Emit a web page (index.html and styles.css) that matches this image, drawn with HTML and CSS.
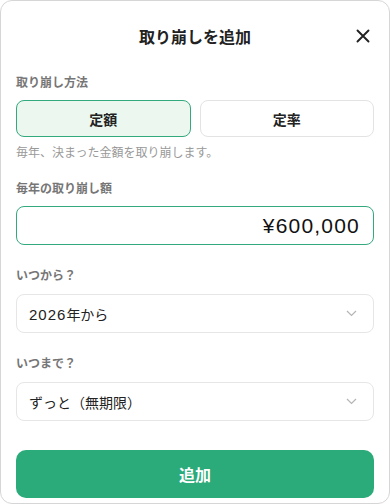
FILE: index.html
```html
<!DOCTYPE html>
<html lang="ja">
<head>
<meta charset="utf-8">
<link rel="stylesheet" href="styles.css">
</head>
<body>
<div class="card">
  <header class="header">
    <h1 class="title">取り崩しを追加</h1>
    <button class="close" aria-label="閉じる">
      <svg width="14" height="14" viewBox="0 0 14 14"><path d="M1.5 1.5L12.5 12.5M12.5 1.5L1.5 12.5" stroke="#222" stroke-width="1.9" stroke-linecap="round" fill="none"/></svg>
    </button>
  </header>

  <div class="label">取り崩し方法</div>
  <div class="toggle">
    <button class="opt active">定額</button>
    <button class="opt">定率</button>
  </div>
  <p class="desc">毎年、決まった金額を取り崩します。</p>

  <div class="label l2">毎年の取り崩し額</div>
  <div class="input">¥600,000</div>

  <div class="label l3">いつから？</div>
  <div class="select"><span><span class="num">2026</span>年から</span>
    <svg class="chev" width="11" height="7" viewBox="0 0 11 7"><path d="M1 1l4.5 4.5L10 1" stroke="#b5b5b5" stroke-width="1.2" fill="none"/></svg>
  </div>

  <div class="label l3">いつまで？</div>
  <div class="select"><span>ずっと（無期限）</span>
    <svg class="chev" width="11" height="7" viewBox="0 0 11 7"><path d="M1 1l4.5 4.5L10 1" stroke="#b5b5b5" stroke-width="1.2" fill="none"/></svg>
  </div>

  <button class="submit">追加</button>
</div>
</body>
</html>
```
FILE: styles.css
```css
* { box-sizing: border-box; }
html, body { margin: 0; padding: 0; background: #fff; }
body {
  font-family: "Liberation Sans", "Noto Sans CJK JP", sans-serif;
  color: #222;
}
.card {
  width: 390px;
  height: 504px;
  border: 1px solid #d6d6d6;
  border-radius: 12px;
  padding: 0 15px;
  display: flex;
  flex-direction: column;
  background: #fff;
}
.header {
  height: 72px;
  display: flex;
  align-items: center;
  justify-content: center;
  position: relative;
  padding-bottom: 3px;
}
.title {
  margin: 0;
  font-size: 16px;
  font-weight: 700;
  font-family: "Noto Sans CJK JP", sans-serif;
  color: #222;
}
.close {
  position: absolute;
  right: 2px;
  top: 26px;
  width: 18px;
  height: 18px;
  padding: 0;
  border: 0;
  background: none;
  display: flex;
  align-items: center;
  justify-content: center;
}
.label {
  font-family: "Noto Sans CJK JP", sans-serif;
  font-size: 12px;
  line-height: 18px;
  font-weight: 700;
  color: #767676;
  margin-bottom: 9px;
}
.l2 { margin-top: 18px; }
.l3 { margin-top: 21px; margin-bottom: 10px; }
.toggle {
  display: flex;
  gap: 9px;
}
.opt {
  flex: 1;
  height: 37px;
  border: 1px solid #e3e3e3;
  border-radius: 8px;
  background: #fff;
  font-family: "Noto Sans CJK JP", sans-serif;
  font-size: 14px;
  font-weight: 700;
  color: #222;
  padding: 0;
}
.opt.active {
  background: #ebf7ef;
  border-color: #33aa7e;
}
.desc {
  margin: 6px 0 0;
  font-family: "Noto Sans CJK JP", sans-serif;
  font-size: 12px;
  line-height: 18px;
  color: #999;
}
.input {
  height: 39px;
  border: 1px solid #33aa7e;
  border-radius: 8px;
  display: flex;
  align-items: center;
  justify-content: flex-end;
  padding-right: 13px;
  font-family: "Liberation Sans", "Noto Sans CJK JP", sans-serif;
  font-size: 21px;
  letter-spacing: 1.2px;
  color: #111;
}
.select {
  height: 39px;
  border: 1px solid #e6e6e6;
  border-radius: 8px;
  display: flex;
  align-items: center;
  justify-content: space-between;
  padding: 0 16px 0 12px;
  font-family: "Noto Sans CJK JP", sans-serif;
  font-size: 14px;
  color: #222;
}
.num {
  font-family: "Liberation Sans", sans-serif;
  font-size: 15px;
  letter-spacing: 1px;
}
.chev { display: block; }
.submit {
  margin-top: 29px;
  height: 48px;
  border: 0;
  border-radius: 10px;
  background: #2baa7a;
  color: #fff;
  font-family: "Noto Sans CJK JP", sans-serif;
  font-size: 16px;
  font-weight: 700;
  padding: 0;
}
```
